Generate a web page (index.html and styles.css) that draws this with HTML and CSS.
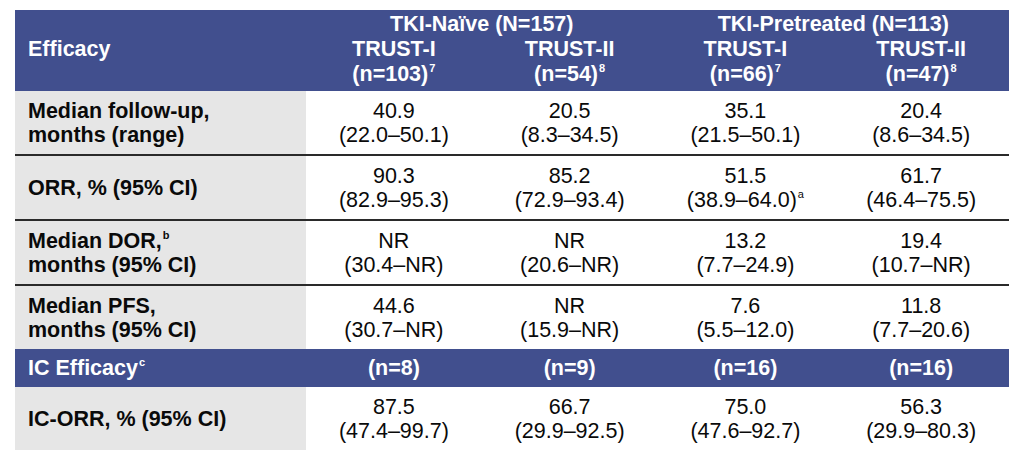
FILE: index.html
```html
<!DOCTYPE html>
<html lang="en">
<head>
<meta charset="utf-8">
<title>Efficacy table</title>
<link rel="stylesheet" href="styles.css">
</head>
<body>
<div class="page">
<table class="eff">
  <colgroup>
    <col class="c-label">
    <col class="c-data"><col class="c-data"><col class="c-data"><col class="c-data">
  </colgroup>
  <thead>
    <tr class="h-group">
      <th class="h-label" rowspan="2">Efficacy</th>
      <th colspan="2">TKI-Naïve (N=157)</th>
      <th colspan="2">TKI-Pretreated (N=113)</th>
    </tr>
    <tr class="h-sub">
      <th>TRUST-I<br>(n=103)<sup>7</sup></th>
      <th>TRUST-II<br>(n=54)<sup>8</sup></th>
      <th>TRUST-I<br>(n=66)<sup>7</sup></th>
      <th>TRUST-II<br>(n=47)<sup>8</sup></th>
    </tr>
  </thead>
  <tbody>
    <tr class="row sep">
      <th>Median follow-up,<br>months (range)</th>
      <td>40.9<br>(22.0–50.1)</td>
      <td>20.5<br>(8.3–34.5)</td>
      <td>35.1<br>(21.5–50.1)</td>
      <td>20.4<br>(8.6–34.5)</td>
    </tr>
    <tr class="row sep">
      <th>ORR, % (95% CI)</th>
      <td>90.3<br>(82.9–95.3)</td>
      <td>85.2<br>(72.9–93.4)</td>
      <td>51.5<br>(38.9–64.0)<sup>a</sup></td>
      <td>61.7<br>(46.4–75.5)</td>
    </tr>
    <tr class="row sep">
      <th>Median DOR,<sup>b</sup><br>months (95% CI)</th>
      <td>NR<br>(30.4–NR)</td>
      <td>NR<br>(20.6–NR)</td>
      <td>13.2<br>(7.7–24.9)</td>
      <td>19.4<br>(10.7–NR)</td>
    </tr>
    <tr class="row">
      <th>Median PFS,<br>months (95% CI)</th>
      <td>44.6<br>(30.7–NR)</td>
      <td>NR<br>(15.9–NR)</td>
      <td>7.6<br>(5.5–12.0)</td>
      <td>11.8<br>(7.7–20.6)</td>
    </tr>
    <tr class="band">
      <th>IC Efficacy<sup>c</sup></th>
      <td>(n=8)</td>
      <td>(n=9)</td>
      <td>(n=16)</td>
      <td>(n=16)</td>
    </tr>
    <tr class="row last">
      <th>IC-ORR, % (95% CI)</th>
      <td>87.5<br>(47.4–99.7)</td>
      <td>66.7<br>(29.9–92.5)</td>
      <td>75.0<br>(47.6–92.7)</td>
      <td>56.3<br>(29.9–80.3)</td>
    </tr>
  </tbody>
</table>
</div>
</body>
</html>
```

FILE: styles.css
```css
html, body {
  margin: 0;
  padding: 0;
  background: #ffffff;
}

.page {
  padding: 10px 15px 0 15px;
}

.eff {
  width: 994px;
  border-collapse: collapse;
  table-layout: fixed;
  font-family: "Liberation Sans", Arial, sans-serif;
  font-size: 21.5px;
  color: #0a0a0a;
}

.c-label { width: 291px; }
.c-data { width: 175.75px; }

.eff th, .eff td {
  padding: 0;
  text-align: center;
  vertical-align: middle;
}

.eff sup {
  font-size: 11px;
  line-height: 11px;
  vertical-align: top;
  position: relative;
  top: 1px;
  margin-left: 1px;
}

/* header */
.eff thead th {
  background: #414f8e;
  color: #ffffff;
  font-weight: bold;
  line-height: 25px;
}

.eff thead .h-group th {
  padding-top: 2px;
}

.eff thead .h-sub th {
  padding-bottom: 4px;
}

.eff thead .h-label {
  text-align: left;
  padding-left: 13px;
  padding-top: 0;
  padding-bottom: 4px;
}

/* body rows */
.row th {
  background: #e6e6e6;
  text-align: left;
  padding-left: 13px;
  font-weight: bold;
}

.row th, .row td {
  height: 63px;
  line-height: 24px;
}

.row.sep th, .row.sep td {
  border-bottom: 2px solid #2a2a2a;
}

.band th, .band td {
  background: #414f8e;
  color: #ffffff;
  font-weight: bold;
  height: 38px;
  line-height: 24px;
}

.band th {
  text-align: left;
  padding-left: 13px;
}
```
